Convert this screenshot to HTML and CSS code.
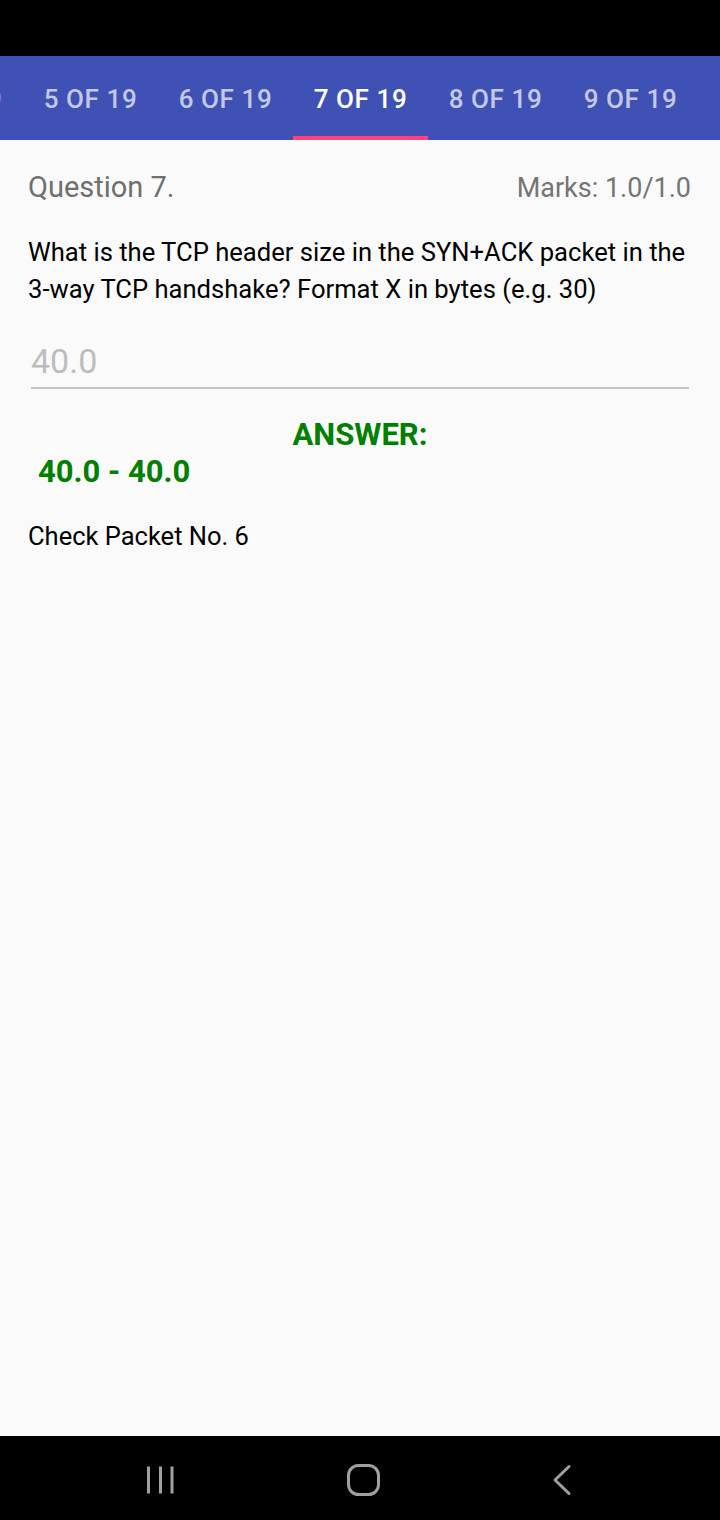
FILE: index.html
```html
<!DOCTYPE html>
<html>
<head>
<meta charset="utf-8">
<link rel="stylesheet" href="styles.css">
</head>
<body>
<div class="screen">
  <div class="statusbar"></div>
  <div class="tabbar">
    <div class="tabs">
      <div class="tab">4 OF 19</div>
      <div class="tab">5 OF 19</div>
      <div class="tab">6 OF 19</div>
      <div class="tab active">7 OF 19</div>
      <div class="tab">8 OF 19</div>
      <div class="tab">9 OF 19</div>
    </div>
  </div>
  <main class="content">
    <div class="qhead">
      <span class="qtitle">Question 7.</span>
      <span class="marks">Marks: 1.0/1.0</span>
    </div>
    <p class="question">What is the TCP header size in the SYN+ACK packet in the <span class="nowrap">3-way</span> TCP handshake? Format X in bytes (e.g. 30)</p>
    <div class="field"><span class="value">40.0</span></div>
    <div class="answer-label">ANSWER:</div>
    <div class="answer-value">40.0 - 40.0</div>
    <p class="hint">Check Packet No. 6</p>
  </main>
  <nav class="navbar">
    <svg class="nav-icon" width="28" height="30" viewBox="0 0 28 30">
      <g stroke="#a0a0a0" stroke-width="3" stroke-linecap="butt">
        <line x1="2.5" y1="1.5" x2="2.5" y2="28.5"/>
        <line x1="14.5" y1="1.5" x2="14.5" y2="28.5"/>
        <line x1="26" y1="1.5" x2="26" y2="28.5"/>
      </g>
    </svg>
    <svg class="nav-icon" width="33" height="32" viewBox="0 0 33 32">
      <rect x="1.5" y="1.5" width="30" height="29" rx="10" fill="none" stroke="#a0a0a0" stroke-width="3"/>
    </svg>
    <svg class="nav-icon" width="20" height="32" viewBox="0 0 20 32">
      <polyline points="17,2.5 3,16 17,29.5" fill="none" stroke="#a0a0a0" stroke-width="3" stroke-linecap="round" stroke-linejoin="round"/>
    </svg>
  </nav>
</div>
</body>
</html>
```

FILE: styles.css
```css
* { box-sizing: border-box; }
html, body { margin: 0; padding: 0; }
body {
  width: 720px;
  height: 1520px;
  overflow: hidden;
  font-family: Roboto, "Noto Sans", sans-serif;
  background: #fafafa;
}
.screen {
  display: flex;
  flex-direction: column;
  height: 1520px;
}
.statusbar {
  height: 56px;
  background: #000;
  flex: none;
}
.tabbar {
  height: 84px;
  background: #3f51b5;
  overflow: hidden;
  flex: none;
}
.tabs {
  display: flex;
  margin-left: -112px;
  height: 100%;
}
.tab {
  flex: none;
  width: 135px;
  height: 100%;
  display: flex;
  align-items: center;
  justify-content: center;
  font-size: 26px;
  letter-spacing: 0.6px;
  font-weight: 500;
  color: rgba(255,255,255,0.7);
  padding-top: 2px;
}
.tab.active {
  color: #fff;
  border-bottom: 4px solid #ff4081;
  padding-top: 6px;
}
.content {
  flex: 1;
  padding: 0 28px;
}
.qhead {
  display: flex;
  justify-content: space-between;
  align-items: baseline;
  margin-top: 28px;
  line-height: 38px;
}
.qtitle {
  font-size: 29px;
  color: #6f6f6f;
}
.marks {
  font-size: 27px;
  color: #757575;
  margin-right: 1px;
}
.question {
  margin: 27px 0 0 0;
  font-size: 25.6px;
  line-height: 37px;
  color: #000;
}
.nowrap { white-space: nowrap; }
.field {
  margin: 31px 3px 0 3px;
  height: 50px;
  border-bottom: 2px solid #c4c4c4;
  display: flex;
  align-items: center;
}
.value {
  font-size: 34px;
  color: #bdbdbd;
  padding-bottom: 4px;
}
.answer-label {
  margin-top: 26px;
  text-align: center;
  font-size: 31px;
  font-weight: 700;
  color: #008000;
  line-height: 40px;
}
.answer-value {
  margin-top: -1px;
  margin-left: 10px;
  font-size: 31px;
  font-weight: 700;
  color: #008000;
  line-height: 36px;
}
.hint {
  margin: 30px 0 0 0;
  font-size: 25.5px;
  line-height: 32px;
  color: #000;
}
.navbar {
  flex: none;
  height: 84px;
  background: #000;
  display: flex;
  align-items: center;
  justify-content: space-between;
  padding: 4px 148px 0 146px;
}
.nav-icon { display: block; }
```
